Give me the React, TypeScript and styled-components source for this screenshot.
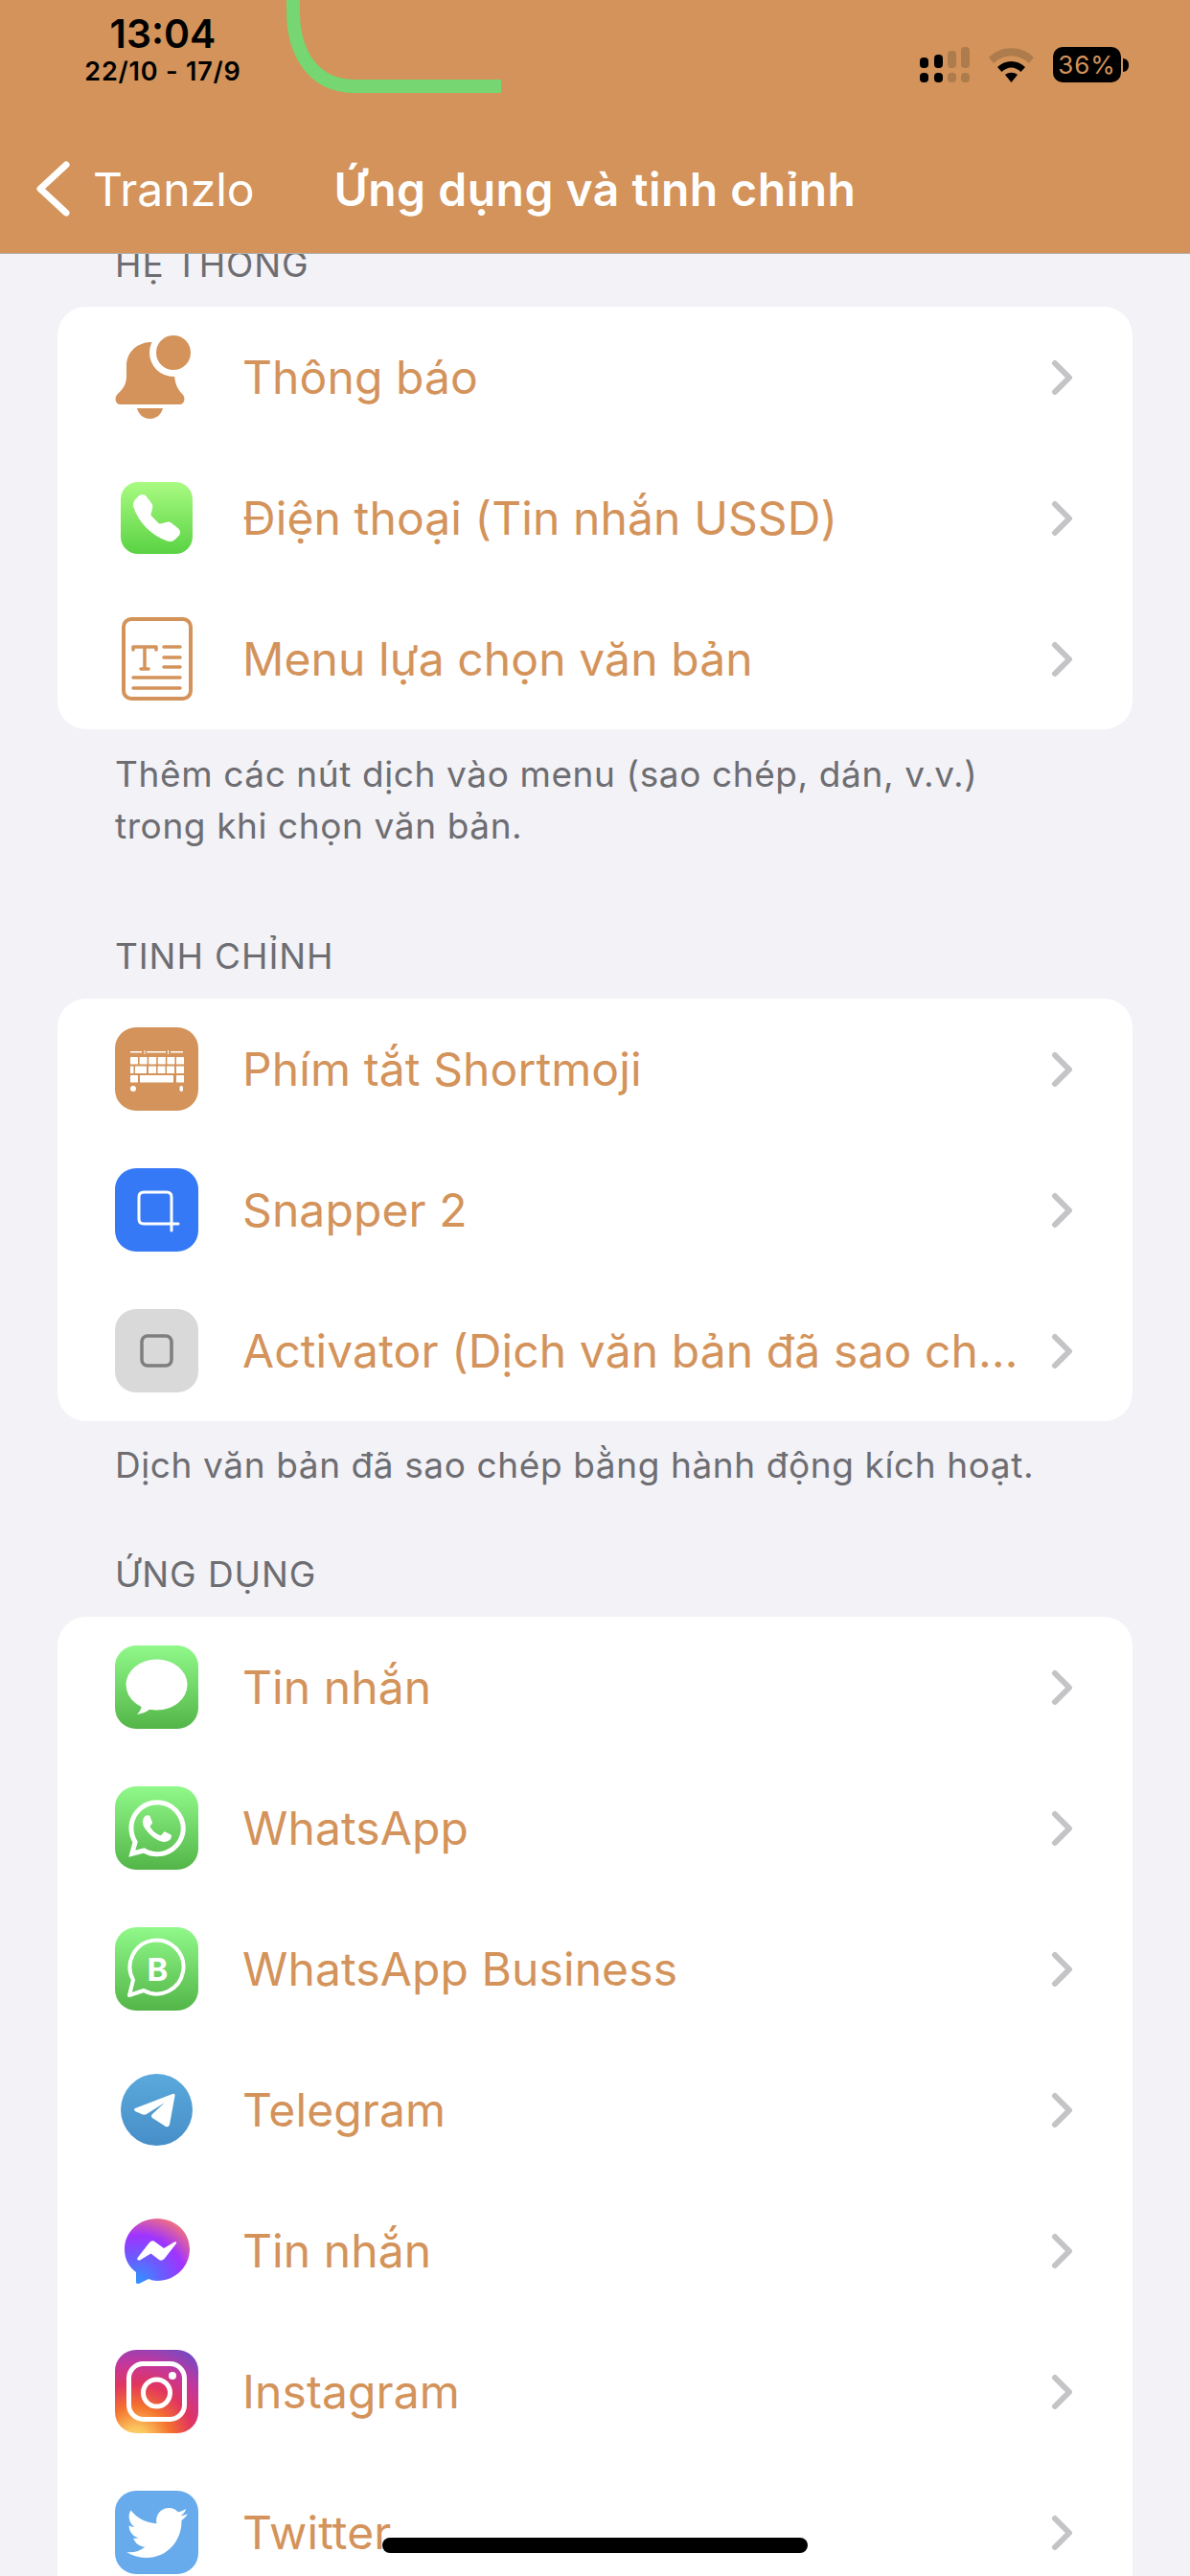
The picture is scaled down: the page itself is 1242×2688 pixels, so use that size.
import styled, { createGlobalStyle } from 'styled-components';
import { ReactNode } from 'react';
import { BsTelephoneFill } from 'react-icons/bs';
import { FaTwitter, FaWhatsapp } from 'react-icons/fa';

const TAN = '#d3935a';

const GlobalStyle = createGlobalStyle`
  html, body {
    margin: 0;
    padding: 0;
    background: #f2f2f7;
  }
  * {
    box-sizing: border-box;
  }
`;

const Page = styled.div`
  width: 1242px;
  height: 2688px;
  display: flex;
  flex-direction: column;
  overflow: hidden;
  position: relative;
  background: #f2f2f7;
  font-family: Inter, 'Noto Sans', sans-serif;
`;

const Header = styled.header`
  position: relative;
  flex: 0 0 265px;
  background: ${TAN};
  border-bottom: 1px solid #b4b0ab;
`;

const IslandArc = styled.svg`
  position: absolute;
  left: 290px;
  top: 0;
`;

const StatusBar = styled.div`
  height: 150px;
  display: flex;
  justify-content: space-between;
  align-items: flex-start;
  padding-right: 64px;
`;

const Clock = styled.div`
  width: 340px;
  padding-top: 10px;
  display: flex;
  flex-direction: column;
  align-items: center;
  color: #000;
`;

const ClockTime = styled.div`
  font-size: 41px;
  line-height: 50px;
  font-weight: 600;
`;

const ClockDate = styled.div`
  font-size: 27px;
  line-height: 30px;
  font-weight: 600;
  letter-spacing: 0.8px;
`;

const StatusIcons = styled.div`
  display: flex;
  align-items: center;
  gap: 20px;
  padding-top: 49px;
`;

const Battery = styled.div`
  display: flex;
  align-items: center;
  gap: 2px;
`;

const BatteryBody = styled.div`
  width: 71px;
  height: 37px;
  border-radius: 10px;
  background: #000;
  color: ${TAN};
  font-size: 26px;
  line-height: 37px;
  text-align: center;
  letter-spacing: 1px;
`;

const BatteryTip = styled.div`
  width: 6px;
  height: 14px;
  border-radius: 0 7px 7px 0;
  background: #000;
`;

const NavBar = styled.nav`
  display: grid;
  grid-template-columns: 1fr auto 1fr;
  align-items: center;
  height: 70px;
  margin-top: 12px;
  color: #fff;
  font-size: 48px;
`;

const BackLink = styled.div`
  display: flex;
  align-items: center;
  gap: 24px;
  padding-left: 37px;
`;

const NavTitle = styled.div`
  font-weight: 600;
  letter-spacing: 0.5px;
`;

const Content = styled.main`
  flex: 1;
  min-height: 0;
  overflow: hidden;
`;

const Section = styled.section<{ $top: number }>`
  margin-top: ${(p) => p.$top}px;
`;

const SectionLabel = styled.div`
  height: 44px;
  line-height: 44px;
  margin-bottom: 22px;
  padding-left: 120px;
  font-size: 37px;
  letter-spacing: 0.9px;
  color: #6d6d72;
`;

const Card = styled.div`
  margin: 0 60px;
  border-radius: 30px;
  background: #fff;
`;

const Row = styled.div`
  height: 147px;
  display: flex;
  align-items: center;
  gap: 46px;
  padding: 0 60px;
`;

const IconSlot = styled.div`
  flex: 0 0 87px;
  height: 87px;
  display: flex;
  align-items: center;
  justify-content: center;
`;

const AppIcon = styled.div<{ $bg: string; $size?: number; $radius?: number }>`
  width: ${(p) => p.$size ?? 87}px;
  height: ${(p) => p.$size ?? 87}px;
  border-radius: ${(p) => p.$radius ?? 22}px;
  background: ${(p) => p.$bg};
  color: #fff;
  display: flex;
  align-items: center;
  justify-content: center;
`;

const RowLabel = styled.div`
  flex: 1;
  min-width: 0;
  font-size: 48px;
  line-height: 62px;
  letter-spacing: 0.1px;
  color: ${TAN};
  white-space: nowrap;
  overflow: hidden;
  text-overflow: ellipsis;
`;

const Chevron = styled.svg`
  flex: 0 0 26px;
  margin-left: -16px;
`;

const FootNote = styled.p<{ $top: number }>`
  margin: ${(p) => p.$top}px 0 0;
  padding: 0 120px;
  font-size: 37px;
  line-height: 54px;
  letter-spacing: 0.6px;
  color: #6d6d72;
`;

const HomeBar = styled.div`
  position: absolute;
  left: 399px;
  top: 2648px;
  width: 444px;
  height: 16px;
  border-radius: 8px;
  background: #000;
`;

const GREEN = 'linear-gradient(180deg, #90f98a 0%, #53b548 100%)';

const BellIcon = () => (
  <svg width="87" height="87" viewBox="0 0 87 87">
    <path
      fill={TAN}
      d="M37 7C20 8 12 20 12 32V42C12 52 8 56 2 62C-1 66 1 72 5 72H68C72 72 74 66 71 62C66 57 63 52 62 42C62 30 54 6 37 7Z"
    />
    <path fill={TAN} d="M23 76H50C48 83 43 87 36.500 87C30 87 25 83 23 76Z" />
    <circle cx="61" cy="18" r="25" fill="#fff" />
    <circle cx="61" cy="18" r="18" fill={TAN} />
  </svg>
);

const TextMenuIcon = () => (
  <svg width="74" height="87" viewBox="0 0 74 87" fill="none" stroke={TAN} strokeLinecap="round">
    <rect x="2" y="2" width="70" height="83" rx="8" strokeWidth="4" />
    <g strokeWidth="3.500">
      <path d="M12 31H36M12 31V34M36 31V34M24 31V54M20 54H28" />
      <path d="M44 31H61M44 42H61M44 52H61M12 63H61M12 74H61" />
    </g>
  </svg>
);

const KeyboardIcon = () => {
  const keys = [16, 25.600, 35.200, 44.800, 54.400, 64];
  return (
    <svg width="87" height="87" viewBox="0 0 87 87" fill="#fff">
      <path d="M16 25h12v1.500H16zM33 25h20v1.500H33zM58 25h13v1.500H58zM30.500 24h1v4h-1zM55 24h1v4h-1z" />
      {keys.map((x) => (
        <rect key={x} x={x} y="31" width="8" height="7.500" rx="0.500" />
      ))}
      <rect x="21" y="40.500" width="12" height="7.500" rx="0.500" />
      <rect x="16" y="40.500" width="3.500" height="7.500" rx="0.500" />
      {[35, 44.500, 54].map((x) => (
        <rect key={x} x={x} y="40.500" width="8" height="7.500" rx="0.500" />
      ))}
      <rect x="64" y="40.500" width="8" height="7.500" rx="0.500" />
      <rect x="16" y="50" width="8" height="7.500" rx="0.500" />
      <rect x="26" y="50" width="35" height="7.500" rx="0.500" />
      <rect x="64" y="50" width="8" height="7.500" rx="0.500" />
      <circle cx="19" cy="64" r="3" />
      <rect x="67.500" y="61" width="3.500" height="6" rx="1.700" />
    </svg>
  );
};

const CropIcon = () => (
  <svg width="87" height="87" viewBox="0 0 87 87" fill="none" stroke="#fff" strokeWidth="3" strokeLinecap="round">
    <path d="M30 25H54Q59 25 59 30V65M66 58H30Q25 58 25 53V30Q25 25 30 25" />
  </svg>
);

const SquareIcon = () => (
  <svg width="87" height="87" viewBox="0 0 87 87" fill="none" stroke="#7e7e7e" strokeWidth="3.500">
    <rect x="28" y="28" width="31" height="31" rx="6" />
  </svg>
);

const MessageBubble = () => (
  <svg width="87" height="87" viewBox="0 0 87 87" fill="#fff">
    <ellipse cx="43.500" cy="41" rx="32" ry="26.500" />
    <path d="M28 60C28 66 26 69 23 72C29 71 34 69 38 65Z" />
  </svg>
);

const BusinessGlyph = () => (
  <svg width="87" height="87" viewBox="0 0 87 87" fill="none">
    <path d="M15 71L19 55A28 28 0 1 1 30 66Z" stroke="#fff" strokeWidth="4" strokeLinejoin="round" />
    <text x="44.500" y="56" textAnchor="middle" fontFamily="Inter, sans-serif" fontSize="33" fontWeight="700" fill="#fff">
      B
    </text>
  </svg>
);

const TelegramIcon = () => (
  <svg width="75" height="75" viewBox="0 0 75 75">
    <defs>
      <linearGradient id="tg" x1="0" y1="0" x2="0" y2="1">
        <stop offset="0" stopColor="#5aa9dc" />
        <stop offset="1" stopColor="#478ec8" />
      </linearGradient>
    </defs>
    <circle cx="37.500" cy="37.500" r="37.500" fill="url(#tg)" />
    <path
      fill="#fff"
      d="M15 36L54 21Q57 20 56.500 23L51 53Q50 56 47 55L33 46Q31 44 33 42L46 30L27 42Q25 43 23 42.500L15 39Q13 37 15 36Z"
    />
  </svg>
);

const MessengerIcon = () => (
  <svg width="68" height="68" viewBox="0 0 68 68">
    <defs>
      <radialGradient id="ms" cx="0.200" cy="1" r="1.150">
        <stop offset="0" stopColor="#2c97ff" />
        <stop offset="0.350" stopColor="#6a5cff" />
        <stop offset="0.650" stopColor="#a033ff" />
        <stop offset="1" stopColor="#ff7a6b" />
      </radialGradient>
    </defs>
    <path
      fill="url(#ms)"
      d="M34 0C15 0 0 14 0 32C0 42 4 50 12 56V66Q12 69 15 68L25 63Q29 65 34 65C53 65 68 50 68 32C68 14 53 0 34 0Z"
    />
    <path
      fill="#fff"
      d="M13.500 41L26 25Q29 22 32 24.500L41 31L52 24.500Q55 23.500 54 26L41.500 42Q38.500 45 36 43L27.500 36.500L16 43.500Q12.500 44 13.500 41Z"
    />
  </svg>
);

const InstagramGlyph = () => (
  <svg width="87" height="87" viewBox="0 0 87 87" fill="none" stroke="#fff" strokeWidth="5">
    <rect x="14.500" y="14.500" width="58" height="58" rx="15" />
    <circle cx="43.500" cy="45" r="14" />
    <circle cx="60" cy="27" r="4" fill="#fff" stroke="none" />
  </svg>
);

const SignalBars = () => (
  <svg width="52" height="37" viewBox="0 0 52 37">
    <g fill="#000">
      <rect x="0" y="11" width="9" height="11" rx="4" />
      <rect x="15" y="8" width="9" height="14" rx="4" />
      <rect x="0" y="27" width="9" height="10" rx="4" />
      <rect x="15" y="27" width="9" height="10" rx="4" />
    </g>
    <g fill="#ad7b4c">
      <rect x="29" y="4" width="9" height="18" rx="4" />
      <rect x="43" y="0" width="9" height="22" rx="4" />
      <rect x="29" y="27" width="9" height="10" rx="4" />
      <rect x="43" y="27" width="9" height="10" rx="4" />
    </g>
  </svg>
);

const WifiIcon = () => (
  <svg width="47" height="36" viewBox="0 0 47 36">
    <path fill="#ad7b4c" d="M0 10C13 -3 34 -3 47 10L42 16C32 6 15 6 5 16Z" />
    <path fill="#000" d="M9 20C17 12 30 12 38 20L33.500 25C27 19 20 19 13.500 25Z" />
    <path fill="#000" d="M17 28C21 25 26 25 30 28L23.500 36Z" />
  </svg>
);

type RowItem = { label: string; icon: ReactNode };

const systemRows: RowItem[] = [
  { label: 'Thông báo', icon: <BellIcon /> },
  {
    label: 'Điện thoại (Tin nhắn USSD)',
    icon: (
      <AppIcon $size={75} $radius={18} $bg="linear-gradient(180deg, #a9fb82 0%, #5ad243 100%)">
        <BsTelephoneFill size={49} />
      </AppIcon>
    ),
  },
  { label: 'Menu lựa chọn văn bản', icon: <TextMenuIcon /> },
];

const tweakRows: RowItem[] = [
  {
    label: 'Phím tắt Shortmoji',
    icon: (
      <AppIcon $bg={TAN}>
        <KeyboardIcon />
      </AppIcon>
    ),
  },
  {
    label: 'Snapper 2',
    icon: (
      <AppIcon $bg="#3579f6">
        <CropIcon />
      </AppIcon>
    ),
  },
  {
    label: 'Activator (Dịch văn bản đã sao chép)',
    icon: (
      <AppIcon $bg="#d9d9d9">
        <SquareIcon />
      </AppIcon>
    ),
  },
];

const appRows: RowItem[] = [
  {
    label: 'Tin nhắn',
    icon: (
      <AppIcon $bg={GREEN}>
        <MessageBubble />
      </AppIcon>
    ),
  },
  {
    label: 'WhatsApp',
    icon: (
      <AppIcon $bg={GREEN}>
        <FaWhatsapp size={68} />
      </AppIcon>
    ),
  },
  {
    label: 'WhatsApp Business',
    icon: (
      <AppIcon $bg={GREEN}>
        <BusinessGlyph />
      </AppIcon>
    ),
  },
  { label: 'Telegram', icon: <TelegramIcon /> },
  { label: 'Tin nhắn', icon: <MessengerIcon /> },
  {
    label: 'Instagram',
    icon: (
      <AppIcon $bg="radial-gradient(circle at 25% 110%, #fbdc75 0%, #fbc55f 12%, #f4722f 32%, #e1355f 52%, #c2379f 72%, #5c50cc 100%)">
        <InstagramGlyph />
      </AppIcon>
    ),
  },
  {
    label: 'Twitter',
    icon: (
      <AppIcon $bg="#67abec">
        <FaTwitter size={64} />
      </AppIcon>
    ),
  },
];

const SettingsCard = ({ rows }: { rows: RowItem[] }) => (
  <Card>
    {rows.map((row, i) => (
      <Row key={i}>
        <IconSlot>{row.icon}</IconSlot>
        <RowLabel>{row.label}</RowLabel>
        <Chevron width="26" height="38" viewBox="0 0 26 38" fill="none" stroke="#c4c4c7" strokeWidth="6" strokeLinecap="round" strokeLinejoin="round">
          <path d="M5 4L20 19L5 34" />
        </Chevron>
      </Row>
    ))}
  </Card>
);

export default function App() {
  return (
    <Page>
      <GlobalStyle />
      <Header>
        <IslandArc width="240" height="100" viewBox="0 0 240 100" fill="none">
          <path d="M16 0V12C16 54 36 90 80 90H233" stroke="#76d671" strokeWidth="14" />
        </IslandArc>
        <StatusBar>
          <Clock>
            <ClockTime>13:04</ClockTime>
            <ClockDate>22/10 - 17/9</ClockDate>
          </Clock>
          <StatusIcons>
            <SignalBars />
            <WifiIcon />
            <Battery>
              <BatteryBody>36%</BatteryBody>
              <BatteryTip />
            </Battery>
          </StatusIcons>
        </StatusBar>
        <NavBar>
          <BackLink>
            <svg width="36" height="58" viewBox="0 0 36 58" fill="none" stroke="#fff" strokeWidth="7" strokeLinecap="round" strokeLinejoin="round">
              <path d="M32 4L5 29L32 54" />
            </svg>
            Tranzlo
          </BackLink>
          <NavTitle>Ứng dụng và tinh chỉnh</NavTitle>
        </NavBar>
      </Header>
      <Content>
        <Section $top={-11}>
          <SectionLabel>HỆ THỐNG</SectionLabel>
          <SettingsCard rows={systemRows} />
          <FootNote $top={20}>
            Thêm các nút dịch vào menu (sao chép, dán, v.v.)
            <br />
            trong khi chọn văn bản.
          </FootNote>
        </Section>
        <Section $top={87}>
          <SectionLabel>TINH CHỈNH</SectionLabel>
          <SettingsCard rows={tweakRows} />
          <FootNote $top={19}>Dịch văn bản đã sao chép bằng hành động kích hoạt.</FootNote>
        </Section>
        <Section $top={65}>
          <SectionLabel>ỨNG DỤNG</SectionLabel>
          <SettingsCard rows={appRows} />
        </Section>
      </Content>
      <HomeBar />
    </Page>
  );
}
